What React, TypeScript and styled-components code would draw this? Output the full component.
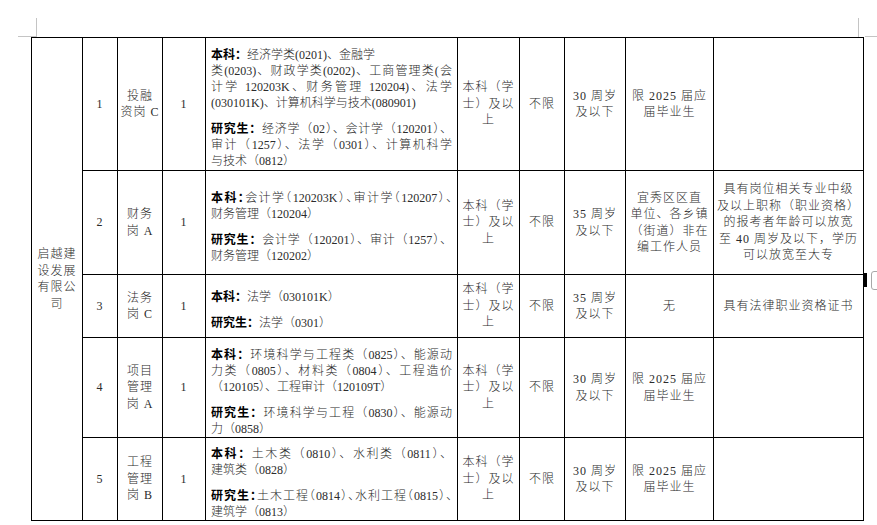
import React from "react";
import styled, { createGlobalStyle, css } from "styled-components";

const GlobalStyle = createGlobalStyle`
  html, body {
    margin: 0;
    padding: 0;
    background: #fff;
  }
`;

const Page = styled.div`
  position: relative;
  width: 877px;
  height: 525px;
  overflow: hidden;
  box-sizing: border-box;
  padding: 37px 0 0 31px;
  background: #fff;
`;

const CornerMark = styled.div<{ $side: "left" | "right" }>`
  position: absolute;
  top: 18px;
  width: 19px;
  height: 19px;
  box-sizing: border-box;
  border-color: #c4c4c4;
  border-style: solid;
  border-width: 0;
  ${(p) =>
    p.$side === "left"
      ? css`
          left: 18px;
          border-right-width: 1px;
          border-bottom-width: 1px;
        `
      : css`
          left: 858px;
          width: 19px;
          border-left-width: 1px;
          &::after {
            content: "";
            position: absolute;
            left: 6px;
            right: 0;
            bottom: 0;
            height: 1px;
            background: #c4c4c4;
          }
        `}
`;

const RowHandle = styled.div`
  position: absolute;
  left: 864px;
  top: 273px;
  width: 3px;
  height: 14px;
  background: #000;
`;

const HandleBox = styled.div`
  position: absolute;
  left: 871px;
  top: 271px;
  width: 16px;
  height: 17px;
  border: 1px solid #a8a8a8;
  border-radius: 3px;
  background: #fff;
`;

const Sheet = styled.table`
  border-collapse: collapse;
  table-layout: fixed;
  width: 833px;
  font-family: "Liberation Serif", "Noto Sans CJK SC", serif;
  font-size: 12px;
  font-weight: 300;
  color: #2b2b2b;
`;

const Row = styled.tr<{ $h: number }>`
  height: ${(p) => p.$h}px;
`;

const Cell = styled.td`
  border: 1px solid #000;
  padding: 0 2px;
  text-align: center;
  vertical-align: middle;
  line-height: 16.5px;
  letter-spacing: 1px;
`;

const MajorCell = styled.td`
  border: 1px solid #000;
  padding: 8px 5px 0;
  text-align: left;
  vertical-align: middle;
  line-height: 16px;
`;

const Para = styled.div`
  & + & {
    margin-top: 10px;
  }
`;

const Label = styled.b`
  font-weight: 700;
  color: #000;
`;

const Line = styled.span<{ $justify?: boolean; $tight?: boolean }>`
  display: block;
  white-space: nowrap;
  ${(p) =>
    p.$justify &&
    css`
      text-align: justify;
      text-align-last: justify;
    `}
  ${(p) =>
    p.$tight &&
    css`
      font-feature-settings: "halt";
    `}
`;

type MLine = { t: string; j?: boolean; h?: boolean };
type MPara = { label: string; lines: MLine[] };
type Job = {
  no: string;
  post: string[];
  count: string;
  major: MPara[];
  edu: string[];
  limit: string[];
  age: string[];
  scope: string[];
  note: string[];
  h: number;
};

const J = (t: string): MLine => ({ t, j: true });
const H = (t: string): MLine => ({ t, j: true, h: true });
const L = (t: string): MLine => ({ t });

const EDU = ["本科（学", "士）及以", "上"];
const GRAD = ["限 2025 届应", "届毕业生"];

const jobs: Job[] = [
  {
    no: "1",
    post: ["投融", "资岗 C"],
    count: "1",
    major: [
      {
        label: "本科：",
        lines: [
          L("经济学类(0201)、金融学"),
          J("类(0203)、财政学类(0202)、工商管理类(会"),
          J("计学 120203K、财务管理 120204)、法学"),
          L("(030101K)、计算机科学与技术(080901)"),
        ],
      },
      {
        label: "研究生：",
        lines: [
          J("经济学（02）、会计学（120201）、"),
          J("审计（1257）、法学（0301）、计算机科学"),
          L("与技术（0812）"),
        ],
      },
    ],
    edu: EDU,
    limit: ["不限"],
    age: ["30 周岁", "及以下"],
    scope: GRAD,
    note: [],
    h: 133,
  },
  {
    no: "2",
    post: ["财务", "岗 A"],
    count: "1",
    major: [
      {
        label: "本科：",
        lines: [H("会计学（120203K）、审计学（120207）、"), L("财务管理（120204）")],
      },
      {
        label: "研究生：",
        lines: [J("会计学（120201）、审计（1257）、"), L("财务管理（120202）")],
      },
    ],
    edu: EDU,
    limit: ["不限"],
    age: ["35 周岁", "及以下"],
    scope: ["宜秀区区直", "单位、各乡镇", "（街道）非在", "编工作人员"],
    note: [
      "具有岗位相关专业中级",
      "及以上职称（职业资格）",
      "的报考者年龄可以放宽",
      "至 40 周岁及以下，学历",
      "可以放宽至大专",
    ],
    h: 104,
  },
  {
    no: "3",
    post: ["法务", "岗 C"],
    count: "1",
    major: [
      { label: "本科：", lines: [L("法学（030101K）")] },
      { label: "研究生：", lines: [L("法学（0301）")] },
    ],
    edu: EDU,
    limit: ["不限"],
    age: ["35 周岁", "及以下"],
    scope: ["无"],
    note: ["具有法律职业资格证书"],
    h: 63,
  },
  {
    no: "4",
    post: ["项目", "管理", "岗 A"],
    count: "1",
    major: [
      {
        label: "本科：",
        lines: [
          J("环境科学与工程类（0825）、能源动"),
          J("力类（0805）、材料类（0804）、工程造价"),
          L("（120105）、工程审计（120109T）"),
        ],
      },
      {
        label: "研究生：",
        lines: [J("环境科学与工程（0830）、能源动"), L("力（0858）")],
      },
    ],
    edu: EDU,
    limit: ["不限"],
    age: ["30 周岁", "及以下"],
    scope: GRAD,
    note: [],
    h: 100,
  },
  {
    no: "5",
    post: ["工程", "管理", "岗 B"],
    count: "1",
    major: [
      {
        label: "本科：",
        lines: [J("土木类（0810）、水利类（0811）、"), L("建筑类（0828）")],
      },
      {
        label: "研究生：",
        lines: [H("土木工程（0814）、水利工程（0815）、"), L("建筑学（0813）")],
      },
    ],
    edu: EDU,
    limit: ["不限"],
    age: ["30 周岁", "及以下"],
    scope: GRAD,
    note: [],
    h: 82,
  },
];

const widths = [51, 35, 45, 43, 252, 62, 45, 61, 88, 150];

const Stack: React.FC<{ lines: string[] }> = ({ lines }) => (
  <>
    {lines.map((l, i) => (
      <Line key={i}>{l}</Line>
    ))}
  </>
);

const Major: React.FC<{ paras: MPara[] }> = ({ paras }) => (
  <MajorCell>
    {paras.map((p, i) => (
      <Para key={i}>
        {p.lines.map((l, k) => (
          <Line key={k} $justify={l.j} $tight={l.h}>
            {k === 0 && <Label>{p.label}</Label>}
            {l.t}
          </Line>
        ))}
      </Para>
    ))}
  </MajorCell>
);

export default function App() {
  return (
    <Page>
      <GlobalStyle />
      <CornerMark $side="left" />
      <CornerMark $side="right" />
      <Sheet>
        <colgroup>
          {widths.map((w, i) => (
            <col key={i} style={{ width: w }} />
          ))}
        </colgroup>
        <tbody>
          {jobs.map((job, i) => (
            <Row key={job.no} $h={job.h}>
              {i === 0 && (
                <Cell rowSpan={jobs.length}>
                  <Stack lines={["启越建", "设发展", "有限公", "司"]} />
                </Cell>
              )}
              <Cell>{job.no}</Cell>
              <Cell>
                <Stack lines={job.post} />
              </Cell>
              <Cell>{job.count}</Cell>
              <Major paras={job.major} />
              <Cell>
                <Stack lines={job.edu} />
              </Cell>
              <Cell>
                <Stack lines={job.limit} />
              </Cell>
              <Cell>
                <Stack lines={job.age} />
              </Cell>
              <Cell>
                <Stack lines={job.scope} />
              </Cell>
              <Cell>
                <Stack lines={job.note} />
              </Cell>
            </Row>
          ))}
        </tbody>
      </Sheet>
      <RowHandle />
      <HandleBox />
    </Page>
  );
}
